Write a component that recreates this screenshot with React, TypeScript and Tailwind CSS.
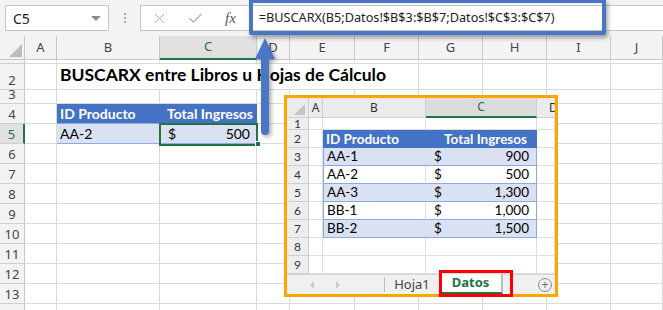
import { X, Check } from 'lucide-react';

const XL = "font-['Lato','Liberation_Sans',sans-serif]";
const UI = "font-['Noto_Sans','Liberation_Sans',sans-serif]";

const MAIN_COLS = [
  { w: 'w-[32px]', l: 'A' },
  { w: 'w-[103px]', l: 'B' },
  { w: 'w-[97px]', l: 'C' },
  { w: 'w-[33px]', l: 'D' },
  { w: 'w-[65px]', l: 'E' },
  { w: 'w-[64px]', l: 'F' },
  { w: 'w-[64px]', l: 'G' },
  { w: 'w-[64px]', l: 'H' },
  { w: 'w-[64px]', l: 'I' },
  { w: 'w-[52px]', l: 'J' },
];

const MINI_COLS = [
  { w: 'w-[14px]', l: 'A' },
  { w: 'w-[103px]', l: 'B' },
  { w: 'w-[111px]', l: 'C' },
  { w: 'w-[18px]', l: 'D' },
];

const MINI_DATA = [
  { id: 'AA-1', v: '900', alt: true },
  { id: 'AA-2', v: '500', alt: false },
  { id: 'AA-3', v: '1,300', alt: true },
  { id: 'BB-1', v: '1,000', alt: false },
  { id: 'BB-2', v: '1,500', alt: true },
];

function RowHead({ n, active }: { n: string; active?: boolean }) {
  return (
    <div
      className={`w-[25px] shrink-0 h-full flex items-end justify-center overflow-hidden border-b border-[#d0d0d0] text-[13px] leading-[18px] ${UI} ${
        active
          ? 'bg-[#e1e1e1] text-[#217346] border-r-2 border-r-[#217346]'
          : 'bg-[#f3f3f3] text-[#444] border-r border-r-[#c8c8c8]'
      }`}
    >
      {n}
    </div>
  );
}

function Blank({ w }: { w: string }) {
  return <div className={`${w} shrink-0 h-full border-r border-b border-[#dadada]`} />;
}

function BlankRow({ n, h }: { n: string; h: string }) {
  return (
    <div className={`flex ${h}`}>
      <RowHead n={n} />
      {MAIN_COLS.map((c) => (
        <Blank key={c.l} w={c.w} />
      ))}
    </div>
  );
}

function FormulaBar() {
  return (
    <div className={`flex items-center h-[36px] bg-[#f3f3f3] pl-[5px] ${UI}`}>
      <div className="w-[104px] h-[26px] shrink-0 bg-white border border-[#c6c6c6] flex items-center pl-[7px] pr-[7px] justify-between">
        <span className="text-[14px] text-[#222]">C5</span>
        <span className="w-0 h-0 border-l-[5px] border-r-[5px] border-t-[5px] border-l-transparent border-r-transparent border-t-[#8a8a8a]" />
      </div>
      <div className="w-[31px] shrink-0 flex flex-col items-center gap-[2px]">
        <span className="w-[2px] h-[2px] bg-[#a8a8a8]" />
        <span className="w-[2px] h-[2px] bg-[#a8a8a8]" />
        <span className="w-[2px] h-[2px] bg-[#a8a8a8]" />
      </div>
      <div className="flex-1 h-[26px] bg-white border border-[#c6c6c6] border-r-0 flex items-center">
        <X size={17} strokeWidth={1.3} className="ml-[10px] text-[#b0b0b0]" />
        <Check size={17} strokeWidth={1.8} className="ml-[19px] text-[#b0b0b0]" />
        <span className="ml-[21px] font-['Liberation_Serif',serif] italic text-[15px] text-[#555]">fx</span>
        <span className="ml-[23px] text-[12.7px] text-[#222] whitespace-nowrap">
          =BUSCARX(B5;Datos!$B$3:$B$7;Datos!$C$3:$C$7)
        </span>
      </div>
    </div>
  );
}

function ColumnHeader() {
  return (
    <div className={`flex h-[24px] bg-[#f3f3f3] ${UI}`}>
      <div className="w-[25px] shrink-0 h-full border-r border-b border-[#c8c8c8] flex items-end justify-end pr-[2px] pb-[2px]">
        <svg width="13" height="13" viewBox="0 0 13 13">
          <polygon points="13,0 13,13 0,13" fill="#bdbdbd" />
        </svg>
      </div>
      {MAIN_COLS.map((c) => (
        <div
          key={c.l}
          className={`${c.w} shrink-0 h-full flex items-center justify-center text-[13px] ${
            c.l === 'C'
              ? 'bg-[#e1e1e1] text-[#217346] border-r border-r-[#c8c8c8] border-b-2 border-b-[#217346]'
              : 'text-[#444] border-r border-b border-[#c8c8c8]'
          }`}
        >
          {c.l}
        </div>
      ))}
    </div>
  );
}

function MainSheet() {
  return (
    <div className={XL}>
      <BlankRow n="1" h="h-[4px]" />
      <div className="flex h-[26px]">
        <RowHead n="2" />
        <Blank w="w-[32px]" />
        <div className="w-[362px] shrink-0 h-full border-r border-b border-[#dadada] flex items-end pl-[3px] pb-[1px] text-[17.5px] font-bold text-black whitespace-nowrap">
          BUSCARX entre Libros u Hojas de Cálculo
        </div>
        {MAIN_COLS.slice(6).map((c) => (
          <Blank key={c.l} w={c.w} />
        ))}
      </div>
      <BlankRow n="3" h="h-[14px]" />
      <div className="flex h-[20px]">
        <RowHead n="4" />
        <Blank w="w-[32px]" />
        <div className="w-[200px] shrink-0 h-full bg-[#4472c4] border-b border-[#8ea9db] flex items-center justify-between px-[3px] text-[14px] font-bold text-white">
          <span>ID Producto</span>
          <span className="pr-[1px]">Total Ingresos</span>
        </div>
        {MAIN_COLS.slice(3).map((c) => (
          <Blank key={c.l} w={c.w} />
        ))}
      </div>
      <div className="flex h-[20px]">
        <RowHead n="5" active />
        <Blank w="w-[32px]" />
        <div className="w-[103px] shrink-0 h-full bg-[#d9e1f2] border-b border-[#8ea9db] flex items-center px-[3px] text-[14px] text-black">
          AA-2
        </div>
        <div className="relative w-[97px] shrink-0 h-full bg-[#d9e1f2] border-b border-[#8ea9db] flex items-center justify-between pl-[8px] pr-[7px] text-[14px] text-black">
          <span>$</span>
          <span>500</span>
          <div className="absolute -left-[1px] -top-[1px] w-[99px] h-[23px] border-2 border-[#217346]" />
          <div className="absolute -right-[4px] -bottom-[4px] w-[6px] h-[6px] bg-[#217346] border border-white" />
        </div>
        {MAIN_COLS.slice(3).map((c) => (
          <Blank key={c.l} w={c.w} />
        ))}
      </div>
      {['6', '7', '8', '9', '10', '11', '12', '13', '14'].map((n) => (
        <BlankRow key={n} n={n} h="h-[20px]" />
      ))}
    </div>
  );
}

function MiniRowHead({ n }: { n: string }) {
  return (
    <div className="w-[22px] shrink-0 h-full bg-[#eeeeee] border-r border-b border-[#cfcfcf] flex items-center justify-center text-[12px] text-[#333] overflow-hidden">
      {n}
    </div>
  );
}

function MiniBlank({ w }: { w: string }) {
  return <div className={`${w} shrink-0 h-full border-r border-b border-[#dedede]`} />;
}

function MiniSheet() {
  return (
    <div className={`flex flex-col w-full h-full bg-white overflow-hidden ${UI}`}>
      <div className="flex h-[20px] shrink-0 bg-[#ebebeb]">
        <div className="w-[22px] shrink-0 h-full border-r border-b border-[#cfcfcf] flex items-end justify-end pr-[3px] pb-[2px]">
          <svg width="11" height="11" viewBox="0 0 11 11">
            <polygon points="11,0 11,11 0,11" fill="#c4c4c4" />
          </svg>
        </div>
        {MINI_COLS.map((c) => (
          <div
            key={c.l}
            className={`${c.w} shrink-0 h-full flex items-center text-[12px] overflow-hidden ${
              c.l === 'C'
                ? 'justify-center bg-[#dcdcdc] text-[#217346] border-r border-r-[#cfcfcf] border-b-2 border-b-[#217346]'
                : c.l === 'D'
                  ? 'justify-start pl-[12px] text-[#333] border-b border-[#cfcfcf]'
                  : 'justify-center text-[#333] border-r border-b border-[#cfcfcf]'
            }`}
          >
            {c.l}
          </div>
        ))}
      </div>
      <div className={XL}>
        <div className="flex h-[12px]">
          <MiniRowHead n="1" />
          {MINI_COLS.map((c) => (
            <MiniBlank key={c.l} w={c.w} />
          ))}
        </div>
        <div className="flex h-[18px]">
          <MiniRowHead n="2" />
          <MiniBlank w="w-[14px]" />
          <div className="w-[214px] shrink-0 h-full bg-[#4472c4] flex items-center justify-between pl-[3px] pr-[10px] text-[13.5px] font-bold text-white">
            <span>ID Producto</span>
            <span>Total Ingresos</span>
          </div>
          <MiniBlank w="w-[18px]" />
        </div>
        {MINI_DATA.map((r, i) => (
          <div key={r.id} className="flex h-[18px]">
            <MiniRowHead n={String(i + 3)} />
            <MiniBlank w="w-[14px]" />
            <div
              className={`w-[103px] shrink-0 h-full border-b border-l border-[#8ea9db] flex items-center pl-[3px] text-[13.5px] text-black ${
                r.alt ? 'bg-[#d9e1f2]' : 'bg-white border-r border-r-[#dedede]'
              }`}
            >
              {r.id}
            </div>
            <div
              className={`w-[111px] shrink-0 h-full border-b border-r border-[#8ea9db] flex items-center justify-between pl-[8px] pr-[7px] text-[13.5px] text-black ${
                r.alt ? 'bg-[#d9e1f2]' : 'bg-white'
              }`}
            >
              <span>$</span>
              <span>{r.v}</span>
            </div>
            <MiniBlank w="w-[18px]" />
          </div>
        ))}
        {['8', '9'].map((n) => (
          <div key={n} className="flex h-[18px]">
            <MiniRowHead n={n} />
            {MINI_COLS.map((c) => (
              <MiniBlank key={c.l} w={c.w} />
            ))}
          </div>
        ))}
      </div>
      <div className="flex items-stretch h-[20px] shrink-0 bg-[#f0f0f0] border-t border-[#d4d4d4]">
        <div className="w-[97px] shrink-0 flex items-center pl-[23px] gap-[22px]">
          <span className="w-0 h-0 border-t-[4px] border-b-[4px] border-r-[4px] border-t-transparent border-b-transparent border-r-[#c8c8c8]" />
          <span className="w-0 h-0 border-t-[4px] border-b-[4px] border-l-[4px] border-t-transparent border-b-transparent border-l-[#c8c8c8]" />
        </div>
        <div className="w-[56px] shrink-0 my-[2px] border-l border-r border-[#bdbdbd] flex items-center justify-center text-[13px] text-[#444]">
          Hoja1
        </div>
        <div className="w-[63px] shrink-0 -mt-[1px] bg-white border-r-2 border-[#bdbdbd] border-b-2 border-b-[#217346] flex items-center justify-center text-[13px] font-bold text-[#217346]">
          Datos
        </div>
        <div className="flex-1" />
        <div className="flex items-center pr-[3px]">
          <span className="w-[14px] h-[14px] rounded-full border border-[#8a8a8a] flex items-center justify-center text-[13px] leading-none text-[#777]">
            +
          </span>
        </div>
      </div>
    </div>
  );
}

export default function App() {
  return (
    <div className="relative w-[663px] h-[310px] overflow-hidden bg-white">
      <FormulaBar />
      <ColumnHeader />
      <MainSheet />

      {/* formula highlight */}
      <div className="absolute left-[249px] -top-[1px] w-[357px] h-[36px] border-[4px] border-[#4a76c6] rounded-[2px] shadow-[2px_3px_4px_rgba(0,0,0,0.35)]" />

      {/* arrow */}
      <svg
        className="absolute left-[250px] top-[34px] drop-shadow-[2px_2px_2px_rgba(0,0,0,0.35)]"
        width="30"
        height="106"
        viewBox="0 0 30 106"
      >
        <rect x="11" y="18" width="8" height="83" rx="4" fill="#4a76c6" />
        <polygon points="15,4 25,25 5,25" fill="#4a76c6" />
      </svg>

      {/* data sheet screenshot */}
      <div className="absolute left-[284px] top-[95px] w-[274px] h-[202px] border-[3px] border-[#ffa500]">
        <MiniSheet />
      </div>

      {/* red tab highlight */}
      <div className="absolute left-[439px] top-[270px] w-[74px] h-[27px] border-[3px] border-[#ff0000]" />
    </div>
  );
}
